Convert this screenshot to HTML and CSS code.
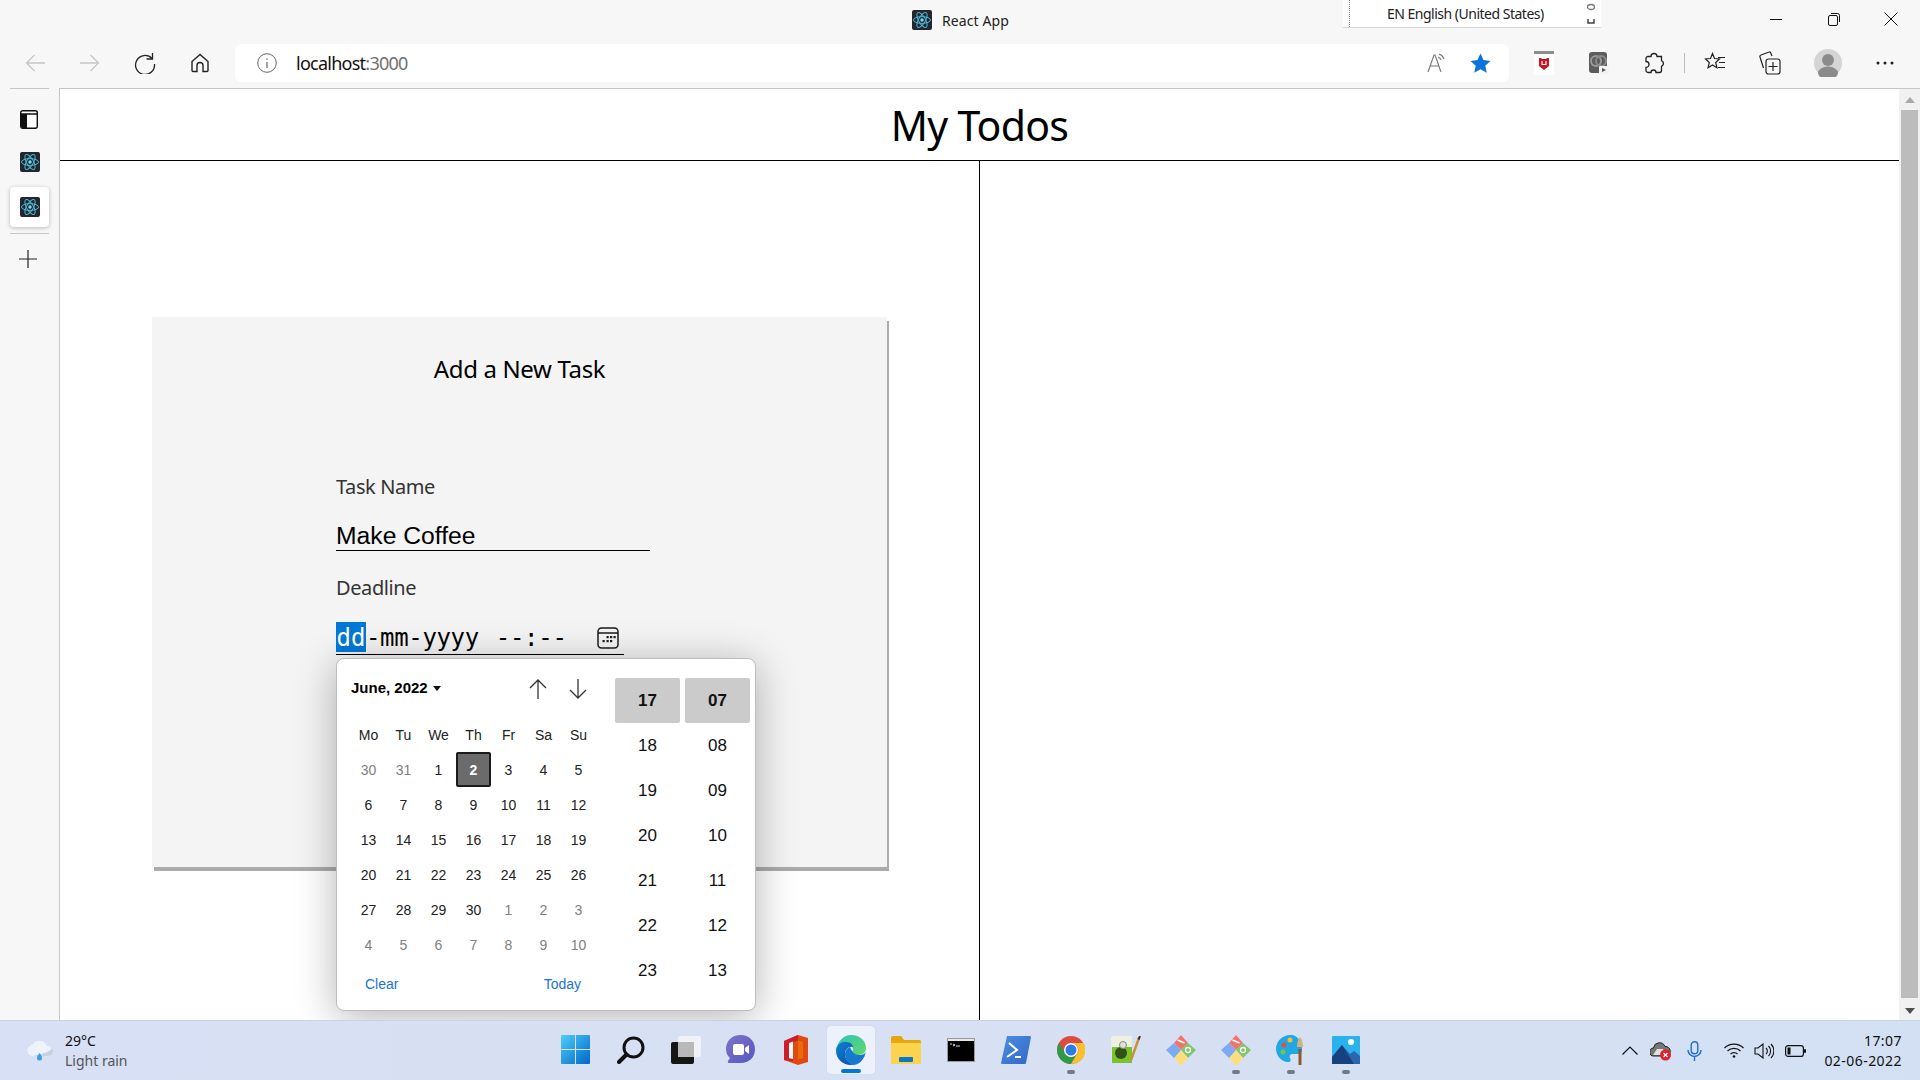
FILE: index.html
```html
<!DOCTYPE html>
<html lang="en">
<head>
<meta charset="utf-8">
<title>React App</title>
<link rel="stylesheet" href="styles.css">
</head>
<body>
<svg class="sprite" aria-hidden="true">
  <defs>
    <symbol id="react" viewBox="0 0 20 20">
      <rect width="20" height="20" rx="2" fill="#23272d"/>
      <g fill="none" stroke="#4db6d4" stroke-width="1">
        <ellipse cx="10" cy="10" rx="8.5" ry="3.4"/>
        <ellipse cx="10" cy="10" rx="8.5" ry="3.4" transform="rotate(60 10 10)"/>
        <ellipse cx="10" cy="10" rx="8.5" ry="3.4" transform="rotate(120 10 10)"/>
      </g>
      <circle cx="10" cy="10" r="1.7" fill="#7fdcf2"/>
    </symbol>
    <symbol id="kraken" viewBox="0 0 30 32">
      <path d="M15 1l7 8-7 7-7-7z" fill="#f0746b"/>
      <path d="M11.500 6l7 3" stroke="#fff" stroke-width="1.500"/>
      <path d="M15 16l7-7 8 7-8 8z" fill="#7ec66a"/>
      <circle cx="22" cy="16" r="2.500" fill="none" stroke="#fff" stroke-width="1.300"/>
      <path d="M15 16l7 8-7 8-7-8z" fill="#fbdf7e"/>
      <path d="M15 16l-7 8-8-8 8-7z" fill="#7cabf2"/>
    </symbol>
  </defs>
</svg>

<div class="titlebar">
  <div></div>
  <div class="window-title">
    <svg class="ic20"><use href="#react"/></svg>
    <span class="window-name">React App</span>
  </div>
  <div class="window-controls">
    <button class="win-btn"><svg width="14" height="14" viewBox="0 0 14 14"><path d="M1 7.500h12" stroke="#111" stroke-width="1"/></svg></button>
    <button class="win-btn"><svg width="14" height="14" viewBox="0 0 14 14" fill="none" stroke="#111"><rect x="1.500" y="3.500" width="9" height="10" rx="1.500"/><path d="M4 1.500h6.500a2 2 0 0 1 2 2V10"/></svg></button>
    <button class="win-btn"><svg width="14" height="14" viewBox="0 0 14 14"><path d="M.5.500l13 13M13.500.500l-13 13" stroke="#111"/></svg></button>
  </div>
  <div class="lang-bar">
    <span class="lang-text">EN English (United States)</span>
    <svg class="lang-mark" width="10" height="27" viewBox="0 0 10 27"><ellipse cx="5" cy="7" rx="3.500" ry="2.500" fill="none" stroke="#777" stroke-width="1.300"/><path d="M2 19v4h6v-4" fill="none" stroke="#444" stroke-width="1.500"/></svg>
  </div>
</div>

<div class="toolbar">
  <button class="tool"><svg width="20" height="18" viewBox="0 0 20 18" fill="none" stroke="#c6c6c6" stroke-width="1.300"><path d="M20 9H1.500M9.500 1l-8 8 8 8"/></svg></button>
  <button class="tool"><svg width="20" height="18" viewBox="0 0 20 18" fill="none" stroke="#c6c6c6" stroke-width="1.300"><path d="M0 9h18.500M10.500 1l8 8-8 8"/></svg></button>
  <button class="tool"><svg width="22" height="22" viewBox="0 0 22 22" fill="none" stroke="#222" stroke-width="1.300"><path d="M18 6.500A9.500 9.500 0 1 0 20.500 12"/><path d="M18.500 1v6h-6"/></svg></button>
  <button class="tool"><svg width="20" height="20" viewBox="0 0 20 20" fill="none" stroke="#222" stroke-width="1.400"><path d="M10 1.500L2 8.500v9a1 1 0 0 0 1 1h4v-6a3 3 0 0 1 6 0v6h4a1 1 0 0 0 1-1v-9z"/></svg></button>
  <div class="address">
    <svg class="addr-info" width="20" height="20" viewBox="0 0 20 20" fill="none" stroke="#666"><circle cx="10" cy="10" r="9.300"/><path d="M10 9v6M10 5.500v1.300" stroke-width="1.200"/></svg>
    <span class="url">localhost<span class="url-port">:3000</span></span>
    <span class="addr-end">
      <svg width="22" height="20" viewBox="0 0 22 20" fill="none" stroke="#777"><path d="M2 19L8 2h1l6 17M4.500 13h9" stroke-width="1.100"/><path d="M12 4a5 5 0 0 1 3 3M13 1a8 8 0 0 1 5 5" stroke-width="1.100"/></svg>
      <svg class="addr-star" width="21" height="20" viewBox="0 0 21 20"><path d="M10.500.500l3 6.600 7 .8-5.200 4.800 1.400 7-6.200-3.500-6.200 3.500 1.400-7L.5 7.900l7-.8z" fill="#0b74da"/></svg>
    </span>
  </div>
  <button class="tool tool-first"><svg width="20" height="24" viewBox="0 0 20 24"><rect y="0" width="20" height="3" fill="#8d8d8d"/><rect y="4" width="20" height="20" fill="#fff"/><path d="M5 7h2l1 1h4l1-1h2v8l-5 4-5-4z" fill="#c8141e"/><path d="M8 10v3.500h4V10" stroke="#fff" fill="none" stroke-width="1.200"/></svg></button>
  <button class="tool"><svg width="20" height="22" viewBox="0 0 20 22"><rect width="18" height="21" rx="3" fill="#5c5c5c"/><circle cx="7" cy="9" r="5" fill="none" stroke="#9a9a9a" stroke-width="2"/><circle cx="12" cy="9" r="5" fill="none" stroke="#8a8a8a" stroke-width="2"/><rect x="10" y="14" width="10" height="8" rx="1" fill="#f2f2f2"/><path d="M13 16l4 2-4 2z" fill="#555"/></svg></button>
  <button class="tool"><svg width="20" height="22" viewBox="0 0 20 22" fill="none" stroke="#222" stroke-width="1.300"><path d="M7 4.500a3 3 0 0 1 6 0h4.500v4.200a3 3 0 0 1 0 5.600v4.200a2 2 0 0 1-2 2H12a2.500 2.500 0 0 0-5 0H4a2 2 0 0 1-2-2v-3a3 3 0 0 0 0-6V6.500a2 2 0 0 1 2-2z"/></svg></button>
  <span class="tool-sep"></span>
  <button class="tool"><svg width="22" height="22" viewBox="0 0 22 22" fill="none" stroke="#222" stroke-width="1.200"><path d="M8.500 1.500l2 5 5 .5-3.800 3.500 1.200 5.200L8.500 13l-4.400 2.700 1.200-5.200L1.500 7l5-.5z"/><path d="M14 5.500h7M15 10.500h6M14 15.500h7"/></svg></button>
  <button class="tool"><svg width="22" height="24" viewBox="0 0 22 24" fill="none" stroke="#222" stroke-width="1.200"><rect x="7" y="8" width="14" height="15" rx="2.500"/><path d="M14 11v9M9.500 15.500h9"/><path d="M13 5l-1.500-3.500a1 1 0 0 0-1.300-.5L2 4a1.500 1.500 0 0 0-1 2l3.500 11"/></svg></button>
  <button class="tool tool-avatar"><svg width="28" height="28" viewBox="0 0 28 28"><circle cx="14" cy="14" r="14" fill="#d4d4d4"/><circle cx="14" cy="11" r="6" fill="#8b8b8b"/><ellipse cx="14" cy="24" rx="10" ry="6.500" fill="#8b8b8b"/></svg></button>
  <button class="tool tool-dots"><svg width="18" height="4" viewBox="0 0 18 4" fill="#222"><circle cx="2" cy="2" r="1.500"/><circle cx="9" cy="2" r="1.500"/><circle cx="16" cy="2" r="1.500"/></svg></button>
</div>

<div class="browser">
  <aside class="sidebar">
    <svg class="side-panel" width="18" height="19" viewBox="0 0 18 19"><rect x=".7" y=".7" width="16.600" height="17.600" rx="2" fill="#fff" stroke="#111" stroke-width="1.400"/><path d="M1 4h16" stroke="#111" stroke-width="1.500"/><path d="M1 4h6v14H3a2 2 0 0 1-2-2z" fill="#111"/></svg>
    <svg class="ic20 side-tab"><use href="#react"/></svg>
    <div class="side-active"><svg class="ic20"><use href="#react"/></svg></div>
    <div class="side-divider"></div>
    <svg class="side-plus" width="18" height="18" viewBox="0 0 18 18"><path d="M9 0v18M0 9h18" stroke="#222" stroke-width="1.200"/></svg>
  </aside>

  <main class="page">
    <h1 class="page-title">My Todos</h1>
    <div class="columns">
      <section class="col-left">
        <div class="card">
          <h2 class="card-title">Add a New Task</h2>
          <form class="form">
            <div class="label">Task Name</div>
            <div class="text-input">Make Coffee</div>
            <div class="label label-second">Deadline</div>
            <div class="date-input">
              <span class="seg-sel">dd</span><span class="seg">-mm-yyyy</span><span class="seg seg-time">--:--</span>
              <svg class="cal-icon" width="22" height="22" viewBox="0 0 22 22"><rect x="1" y="1" width="20" height="20" rx="3.500" fill="none" stroke="#1a1a1a" stroke-width="1.500"/><path d="M1 6h20" stroke="#1a1a1a" stroke-width="1.500"/><g fill="#1a1a1a"><rect x="9.500" y="9" width="2.200" height="2.200"/><rect x="13" y="9" width="2.200" height="2.200"/><rect x="16.500" y="9" width="2.200" height="2.200"/><rect x="5.500" y="13" width="2.200" height="2.200"/><rect x="9.500" y="13" width="2.200" height="2.200"/><rect x="13" y="13" width="2.200" height="2.200"/></g></svg>
              <div class="picker">
                <div class="cal-pane">
                  <div class="cal-head">
                    <span class="cal-month">June, 2022<i class="caret"></i></span>
                    <span class="cal-nav">
                      <svg width="20" height="22" viewBox="0 0 20 22" fill="none" stroke="#333" stroke-width="1.300"><path d="M10 21V2M2 10l8-8 8 8"/></svg>
                      <svg width="20" height="22" viewBox="0 0 20 22" fill="none" stroke="#333" stroke-width="1.300"><path d="M10 1v19M2 12l8 8 8-8"/></svg>
                    </span>
                  </div>
                  <div class="cal-grid">
                    <span class="wd">Mo</span><span class="wd">Tu</span><span class="wd">We</span><span class="wd">Th</span><span class="wd">Fr</span><span class="wd">Sa</span><span class="wd">Su</span>
                    <span class="day off">30</span><span class="day off">31</span><span class="day">1</span><span class="day sel">2</span><span class="day">3</span><span class="day">4</span><span class="day">5</span>
                    <span class="day">6</span><span class="day">7</span><span class="day">8</span><span class="day">9</span><span class="day">10</span><span class="day">11</span><span class="day">12</span>
                    <span class="day">13</span><span class="day">14</span><span class="day">15</span><span class="day">16</span><span class="day">17</span><span class="day">18</span><span class="day">19</span>
                    <span class="day">20</span><span class="day">21</span><span class="day">22</span><span class="day">23</span><span class="day">24</span><span class="day">25</span><span class="day">26</span>
                    <span class="day">27</span><span class="day">28</span><span class="day">29</span><span class="day">30</span><span class="day off">1</span><span class="day off">2</span><span class="day off">3</span>
                    <span class="day off">4</span><span class="day off">5</span><span class="day off">6</span><span class="day off">7</span><span class="day off">8</span><span class="day off">9</span><span class="day off">10</span>
                  </div>
                  <div class="cal-foot"><span>Clear</span><span>Today</span></div>
                </div>
                <div class="time-pane">
                  <div class="time-col">
                    <span class="tm cur">17</span><span class="tm">18</span><span class="tm">19</span><span class="tm">20</span><span class="tm">21</span><span class="tm">22</span><span class="tm">23</span>
                  </div>
                  <div class="time-col">
                    <span class="tm cur">07</span><span class="tm">08</span><span class="tm">09</span><span class="tm">10</span><span class="tm">11</span><span class="tm">12</span><span class="tm">13</span>
                  </div>
                </div>
              </div>
            </div>
          </form>
        </div>
      </section>
      <section class="col-right"></section>
    </div>
  </main>

  <div class="scrollbar">
    <svg class="sb-arrow" width="12" height="8" viewBox="0 0 12 8"><path d="M6 1l5 6H1z" fill="#a8a8a8"/></svg>
    <div class="sb-thumb"></div>
    <svg class="sb-arrow" width="12" height="8" viewBox="0 0 12 8"><path d="M1 1h10L6 7z" fill="#505050"/></svg>
  </div>
</div>

<footer class="taskbar">
  <div class="weather">
    <svg width="28" height="22" viewBox="0 0 28 22"><path d="M7 16a5.500 5.500 0 0 1-.5-11A7.500 7.500 0 0 1 20.500 6 5 5 0 0 1 22 16z" fill="#eef3fb"/><path d="M7 16h15a5 5 0 0 0 4-8c-2 4-10 6-19 8z" fill="#c4d2e4"/><path d="M13.500 13c1.500 2 2.500 3.500 2.500 5a2.500 2.500 0 0 1-5 0c0-1.500 1-3 2.500-5z" fill="#3c9be8"/></svg>
    <div class="weather-text"><div class="temp">29°C</div><div class="cond">Light rain</div></div>
  </div>
  <div class="apps">
    <span class="app"><svg width="29" height="29" viewBox="0 0 29 29"><defs><linearGradient id="w1" x1="0" y1="0" x2="1" y2="1"><stop offset="0" stop-color="#4fcdfb"/><stop offset="1" stop-color="#0067c8"/></linearGradient></defs><path d="M0 1a1 1 0 0 1 1-1h13v14H0zM15 0h13a1 1 0 0 1 1 1v13H15zM0 15h14v14H1a1 1 0 0 1-1-1zM15 15h14v13a1 1 0 0 1-1 1H15z" fill="url(#w1)"/></svg></span>
    <span class="app"><svg width="28" height="28" viewBox="0 0 28 28" fill="none" stroke="#111"><circle cx="16.500" cy="11.500" r="9.500" stroke-width="3"/><path d="M9.500 18.500L2 26" stroke-width="4" stroke-linecap="round"/></svg></span>
    <span class="app"><svg width="30" height="28" viewBox="0 0 30 28"><rect x="0" y="6" width="23" height="22" rx="2" fill="#161616"/><rect x="7" y="0" width="23" height="21" rx="2" fill="#f4f5f8" opacity=".85"/><rect x="7" y="6" width="16" height="15" fill="#b9b9b9"/></svg></span>
    <span class="app"><svg width="29" height="30" viewBox="0 0 29 30"><defs><linearGradient id="t1" x1="0" y1="0" x2="1" y2="1"><stop offset="0" stop-color="#7f72c8"/><stop offset="1" stop-color="#5558c4"/></linearGradient></defs><path d="M14.500 0C23 0 29 6 29 14c0 8.500-6 14-14.500 14H3c-1 0-1.500-1-1-2l2-3C1.500 21 0 18 0 14 0 6 6 0 14.500 0z" fill="url(#t1)"/><rect x="7" y="9" width="11" height="11" rx="2" fill="#fff"/><path d="M19 13l4-3v9l-4-3z" fill="#fff"/></svg></span>
    <span class="app"><svg width="24" height="30" viewBox="0 0 24 30"><path d="M14 0l10 3v24l-10 3L0 25V6z" fill="#de4a12"/><path d="M14 0l-14 6v19l9 1.500V7l5-1.500z" fill="#cd1f2a"/><path d="M5 8l4-1.500V24l-4-.8z" fill="#f4f5f8"/><path d="M14 5.500l5 1.500v16l-5 1.500z" fill="#eb6a0c"/></svg></span>
    <span class="app app-active"><svg width="30" height="30" viewBox="0 0 30 30"><defs><linearGradient id="e1" x1="0" y1="0" x2="1" y2="1"><stop offset="0" stop-color="#2fc2c0"/><stop offset="1" stop-color="#63d866"/></linearGradient><linearGradient id="e2" x1="0" y1="0" x2="1" y2="1"><stop offset="0" stop-color="#0e83d8"/><stop offset="1" stop-color="#0c4d9c"/></linearGradient></defs><path d="M15 0c9 0 15 6 15 13 0 5-4 7-8 7-3 0-6-1-6-3 0-1 1-1 1-3s-2-5-7-5c-4 0-8 3-10 7C1 7 7 0 15 0z" fill="url(#e1)"/><path d="M0 16c0-5 5-10 10-9 5 0 7 3 7 5-4-1-8 2-8 7 0 5 4 10 9 11-1 0-2 0-3 0C7 30 0 24 0 16z" fill="url(#e2)"/><path d="M17 30c-5-1-8-6-8-11 0-3 2-6 5-7 1 3 4 8 9 8 3 0 7-1 7-4-1 7-6 14-13 14z" fill="#1579d2"/></svg><i class="run-bar"></i></span>
    <span class="app"><svg width="30" height="28" viewBox="0 0 30 28"><path d="M0 2a2 2 0 0 1 2-2h8l3 4h15a2 2 0 0 1 2 2v4H0z" fill="#e4a60e"/><rect y="6" width="30" height="22" rx="1.500" fill="#fcd34d"/><rect y="5" width="30" height="2" fill="#eba90d"/><rect x="8" y="21" width="14" height="5" rx="1" fill="#0a78c8"/></svg></span>
    <span class="app"><svg width="28" height="24" viewBox="0 0 28 24"><rect width="28" height="24" fill="#9a9a9a"/><rect x="1" y="3" width="26" height="20" fill="#000"/><rect x="1" y="1" width="26" height="2" fill="#e6e6e6"/><path d="M3 6h2M6 6l2 1-2 1M9 8h4" stroke="#ddd" fill="none"/></svg></span>
    <span class="app"><svg width="30" height="28" viewBox="0 0 30 28"><defs><linearGradient id="p1" x1="0" y1="0" x2="1" y2="1"><stop offset="0" stop-color="#4c8fe0"/><stop offset="1" stop-color="#3367c7"/></linearGradient></defs><path d="M6 0h23a1 1 0 0 1 1 1L25 27a1 1 0 0 1-1 1H1a1 1 0 0 1-1-1z" fill="url(#p1)"/><path d="M8 7l8 7-10 7M14 21h6" stroke="#fff" stroke-width="2" fill="none"/></svg></span>
    <span class="app app-run"><svg width="28" height="28" viewBox="0 0 28 28"><circle cx="14" cy="14" r="14" fill="#dd4b3e"/><path d="M2 7a14 14 0 0 0 12 21l6-10a7 7 0 0 1-12-1z" fill="#2a9c47"/><path d="M14 7h12.500A14 14 0 0 1 14 28l6-10a7 7 0 0 0-6-11z" fill="#fbc02d"/><circle cx="14" cy="14" r="7" fill="#fff"/><circle cx="14" cy="14" r="5.500" fill="#2a7de9"/></svg><i class="run-dot"></i></span>
    <span class="app"><svg width="30" height="28" viewBox="0 0 30 28"><path d="M0 2l2-2h19v27H1z" fill="#eef1e2"/><path d="M1 11h20v16H1z" fill="#7cc22c"/><circle cx="10" cy="17" r="6" fill="#2e5314"/><circle cx="12" cy="9" r="3.500" fill="#dfe3d2" stroke="#888"/><path d="M20 24L28 2" stroke="#c79435" stroke-width="2.500"/><path d="M27.500 3.500L29 0" stroke="#333" stroke-width="2"/></svg></span>
    <span class="app"><svg class="ic-kraken"><use href="#kraken"/></svg></span>
    <span class="app app-run"><svg class="ic-kraken"><use href="#kraken"/></svg><i class="run-dot"></i></span>
    <span class="app app-run"><svg width="30" height="32" viewBox="0 0 30 32"><path d="M16 1C7 0 0 7 0 15c0 7 6 13 12 13 3 0 3-2 2-4s0-4 3-4h5c3 0 4-2 4-5 0-7-4-13-10-14z" fill="#20a8e6"/><circle cx="8" cy="11" r="2.500" fill="#e64c3d"/><circle cx="14" cy="6" r="2.500" fill="#f2c12e"/><circle cx="7" cy="18" r="2.500" fill="#7dc242"/><path d="M24 31V15" stroke="#8a5a2b" stroke-width="3"/><path d="M21 13c0-4 1-8 3-10 2 2 3 6 3 10z" fill="#d7b37c"/></svg><i class="run-dot"></i></span>
    <span class="app app-run"><svg width="28" height="28" viewBox="0 0 28 28"><rect width="28" height="28" rx="1" fill="#29b2ec"/><circle cx="19" cy="6" r="3" fill="#fff"/><path d="M0 21l10-12 8 9 4-3 6 5v8H0z" fill="#2a66b0"/><path d="M10 9l12 19H0V21z" fill="#16437f"/></svg><i class="run-dot"></i></span>
  </div>
  <div class="tray">
    <svg class="tr-chev" width="16" height="9" viewBox="0 0 16 9"><path d="M.5 8.500L8 1l7.500 7.500" fill="none" stroke="#111" stroke-width="1.200"/></svg>
    <svg class="tr-cloud" width="22" height="20" viewBox="0 0 22 20"><path d="M4 15a4 4 0 0 1-.5-8A6 6 0 0 1 15 5.500 4.500 4.500 0 0 1 16 15z" fill="#777" stroke="#222" stroke-width="1"/><path d="M3 14h13l-3-6H7z" fill="#e2e2e2"/><circle cx="15.500" cy="14" r="5.500" fill="#e0202c"/><path d="M13.500 12l4 4m0-4l-4 4" stroke="#fff" stroke-width="1.300"/></svg>
    <svg class="tr-mic" width="15" height="20" viewBox="0 0 15 20" fill="none" stroke="#1f6ed4" stroke-width="1.400"><rect x="4.200" y=".8" width="6.600" height="12" rx="3.300"/><path d="M1 9a6.500 6.500 0 0 0 13 0M7.500 16v4"/></svg>
    <svg class="tr-wifi" width="20" height="15" viewBox="0 0 20 15" fill="none" stroke="#111" stroke-width="1.200"><path d="M.5 5a13.500 13.500 0 0 1 19 0M3.500 8a9.500 9.500 0 0 1 13 0M6.500 11a5 5 0 0 1 7 0"/><circle cx="10" cy="13.500" r="1.300" fill="#111" stroke="none"/></svg>
    <svg class="tr-vol" width="20" height="16" viewBox="0 0 20 16" fill="none" stroke="#111" stroke-width="1.100"><path d="M1 5h3l5-4v14l-5-4H1z"/><path d="M12 5a4 4 0 0 1 0 6M14.500 3a7 7 0 0 1 0 10M17 1a10 10 0 0 1 0 14"/></svg>
    <svg class="tr-bat" width="21" height="12" viewBox="0 0 21 12"><rect x=".6" y=".6" width="17.800" height="10.800" rx="2.500" fill="none" stroke="#111" stroke-width="1.200"/><rect x="2.500" y="2.500" width="3" height="7" fill="#111"/><rect x="19" y="4" width="2" height="4" rx="1" fill="#111"/></svg>
    <div class="clock"><div>17:07</div><div>02-06-2022</div></div>
  </div>
</footer>
</body>
</html>
```

FILE: styles.css
```css
* { box-sizing: border-box; }
html, body { margin: 0; height: 100%; }
body {
  width: 1920px;
  height: 1080px;
  overflow: hidden;
  display: flex;
  flex-direction: column;
  font-family: "Noto Sans", "Open Sans", sans-serif;
  color: #000;
  background: #f7f7f7;
}
button { border: 0; background: none; padding: 0; display: flex; align-items: center; justify-content: center; }
svg { display: block; flex: none; }
.sprite { position: absolute; width: 0; height: 0; }
.ic20 { width: 20px; height: 20px; }

/* title bar */
.titlebar {
  position: relative;
  height: 44px;
  display: grid;
  grid-template-columns: 1fr auto 1fr;
  background: #f7f7f7;
  padding-bottom: 4px;
}
.window-title { display: flex; align-items: center; gap: 10px; font-size: 14px; color: #222; padding-left: 1px; }
.window-name { letter-spacing: .12px; }
.window-controls { display: flex; justify-content: flex-end; }
.win-btn { width: 57.500px; height: 38px; }
.lang-bar {
  position: absolute;
  left: 1343px;
  top: 0;
  width: 258px;
  height: 28px;
  background: #fff;
  border-bottom: 1px solid #d4d4d4;
  display: flex;
  align-items: center;
  padding-left: 44px;
  font-size: 14px;
  color: #222;
}
.lang-bar::before {
  content: "";
  position: absolute;
  left: 6px;
  top: 0;
  bottom: 0;
  border-left: 1px dotted #888;
}
.lang-text { letter-spacing: -.5px; }
.lang-mark { position: absolute; left: 243px; top: 0; }

/* toolbar */
.toolbar {
  height: 44px;
  display: flex;
  align-items: center;
  padding: 0 0 6px 7px;
  background: #f7f7f7;
}
.tool { width: 55px; height: 38px; flex: none; }
.tool-first { margin-left: 7px; }
.tool-sep { width: 1px; height: 20px; background: #bdbdbd; margin: 0 2px 0 3px; flex: none; }
.tool-avatar { margin-left: 3px; }
.tool-dots { margin-left: 2px; }
.address {
  width: 1274px;
  height: 38px;
  margin-left: 8px;
  background: #fff;
  border-radius: 6px;
  display: flex;
  align-items: center;
  padding-left: 22px;
  flex: none;
}
.addr-info { margin-right: 19px; }
.url { font-size: 18px; color: #111; letter-spacing: -.75px; }
.url-port { color: #707070; }
.addr-end { margin-left: auto; display: flex; align-items: center; gap: 22px; padding-right: 18px; }

/* browser area */
.browser { flex: 1; display: flex; min-height: 0; }
.sidebar {
  width: 60px;
  flex: none;
  border-right: 1px solid #c6c6c6;
  display: flex;
  flex-direction: column;
  padding: 22px 0 0 10px;
  position: relative;
}
.sidebar::before {
  content: "";
  position: absolute;
  left: 10px;
  top: 0;
  width: 39px;
  height: 1px;
  background: #c6c6c6;
}
.side-panel { margin-left: 10px; }
.side-tab { margin: 23px 0 0 10px; }
.side-active {
  width: 39px;
  height: 40px;
  margin-top: 15px;
  background: #fff;
  border-radius: 4px;
  box-shadow: 0 1px 4px rgba(0, 0, 0, .25);
  display: flex;
  align-items: center;
  justify-content: center;
}
.side-divider { width: 39px; height: 1px; background: #c6c6c6; margin-top: 6px; }
.side-plus { margin: 16px 0 0 9px; }

/* page */
.page {
  flex: 1;
  min-width: 0;
  background: #fff;
  border-top: 1px solid #c6c6c6;
  display: flex;
  flex-direction: column;
  overflow: hidden;
}
.page-title {
  margin: 0;
  height: 72px;
  border-bottom: 1px solid #000;
  text-align: center;
  font-size: 41px;
  font-weight: 400;
  line-height: 72px;
  letter-spacing: -.7px;
}
.columns { flex: 1; display: grid; grid-template-columns: 920px 1fr; min-height: 0; }
.col-left { padding: 156px 92px 0; border-right: 1px solid #000; }
.col-right { background: #fff; }
.card {
  width: 735px;
  height: 550px;
  background: #f4f4f4;
  box-shadow: 2px 4px 0 #ababab;
  padding-top: 36px;
}
.card-title {
  margin: 0;
  text-align: center;
  font-size: 24px;
  font-weight: 400;
  line-height: 32px;
  letter-spacing: -.35px;
}
.form { margin: 88px 0 0 184px; }
.label { font-size: 20px; line-height: 28px; color: #333; letter-spacing: -.4px; }
.label-second { margin-top: 23px; }
.text-input {
  width: 314px;
  height: 30px;
  margin-top: 20px;
  border-bottom: 1px solid #000;
  font: 24.700px/29px "Liberation Sans", Arial, sans-serif;
}
.date-input {
  position: relative;
  width: 288px;
  height: 33px;
  margin-top: 20px;
  border-bottom: 1px solid #000;
  display: flex;
  align-items: flex-start;
  font: 24px/32px "DejaVu Sans Mono", monospace;
}
.seg-sel { width: 30px; height: 30px; background: #0078d7; color: #fff; text-align: center; }
.seg { letter-spacing: -.35px; }
.seg-time { margin-left: 17px; letter-spacing: -.3px; }
.cal-icon { margin: 5px 5px 0 auto; }

/* picker */
.picker {
  position: absolute;
  left: 0;
  top: 36px;
  width: 420px;
  height: 353px;
  background: #fff;
  border: 1px solid #bdbdbd;
  border-radius: 8px;
  box-shadow: 0 6px 40px rgba(0, 0, 0, .3);
  display: flex;
  font-family: "Liberation Sans", Arial, sans-serif;
  z-index: 2;
}
.cal-pane { width: 278px; padding-left: 14px; flex: none; }
.cal-head { height: 58px; display: flex; align-items: flex-start; justify-content: space-between; padding: 17px 22px 0 0; width: 263px; }
.cal-month { font-size: 15px; font-weight: 700; line-height: 24px; display: flex; align-items: center; }
.caret { width: 0; height: 0; margin-left: 5px; border: 4.500px solid transparent; border-top: 5px solid #111; border-bottom: 0; }
.cal-nav { display: flex; gap: 20px; padding-top: 2px; margin-right: 4px; }
.cal-grid { display: grid; grid-template-columns: repeat(7, 35px); grid-auto-rows: 35px; font-size: 14px; }
.wd, .day { display: flex; align-items: center; justify-content: center; color: #222; }
.off { color: #808080; }
.sel { background: #6b6b6b; color: #fff; font-weight: 700; border: 2px solid #1b1b1b; border-radius: 2px; }
.cal-foot { width: 245px; display: flex; justify-content: space-between; padding: 14px 15px 0 14px; font-size: 14px; line-height: 17px; color: #1a73d8; }
.time-pane { display: flex; gap: 5px; padding-top: 19px; }
.time-col { width: 65px; display: flex; flex-direction: column; }
.tm { height: 45px; flex: none; display: flex; align-items: center; justify-content: center; font-size: 17px; color: #111; }
.cur { background: #cbcbcb; font-weight: 700; border-radius: 2px; }

/* scrollbar */
.scrollbar {
  width: 21px;
  flex: none;
  background: #f1f1f1;
  border-top: 1px solid #c6c6c6;
  display: flex;
  flex-direction: column;
  align-items: center;
  padding-top: 7px;
}
.sb-thumb { width: 17px; height: 888px; margin: 6px 0 9px; background: #bcbcbc; }

/* taskbar */
.taskbar {
  height: 60px;
  flex: none;
  display: grid;
  grid-template-columns: 1fr auto 1fr;
  align-items: center;
  background: linear-gradient(90deg, #d7e0f4, #d8e0f3 50%, #d3e0f3);
  border-top: 1px solid #c9d3e6;
  position: relative;
  z-index: 3;
}
.weather { display: flex; align-items: center; gap: 11px; padding-left: 26px; }
.weather-text { font-size: 14px; line-height: 20px; }
.temp { color: #111; }
.cond { color: #555; }
.apps { display: flex; gap: 7px; padding-left: 1px; margin-bottom: 2px; }
.app { position: relative; width: 48px; height: 48px; display: flex; align-items: center; justify-content: center; border-radius: 4px; }
.app-active { background: #edf1fb; box-shadow: 0 0 1px rgba(0, 0, 0, .15); }
.ic-kraken { width: 30px; height: 32px; }
.run-bar { position: absolute; left: 14px; bottom: 1px; width: 20px; height: 4px; border-radius: 2px; background: #0078d4; }
.run-dot { position: absolute; left: 20px; bottom: 0; width: 8px; height: 4px; border-radius: 2px; background: #747a85; }
.tray { display: flex; align-items: center; justify-self: end; height: 100%; padding-right: 18px; }
.tr-chev { margin-right: 12px; }
.tr-cloud { margin-right: 15px; }
.tr-mic { margin-right: 22px; }
.tr-wifi { margin-right: 10px; }
.tr-vol { margin-right: 11px; }
.tr-bat { margin-right: 18px; }
.clock { text-align: right; font-size: 14px; line-height: 20px; color: #111; letter-spacing: .45px; }
```
